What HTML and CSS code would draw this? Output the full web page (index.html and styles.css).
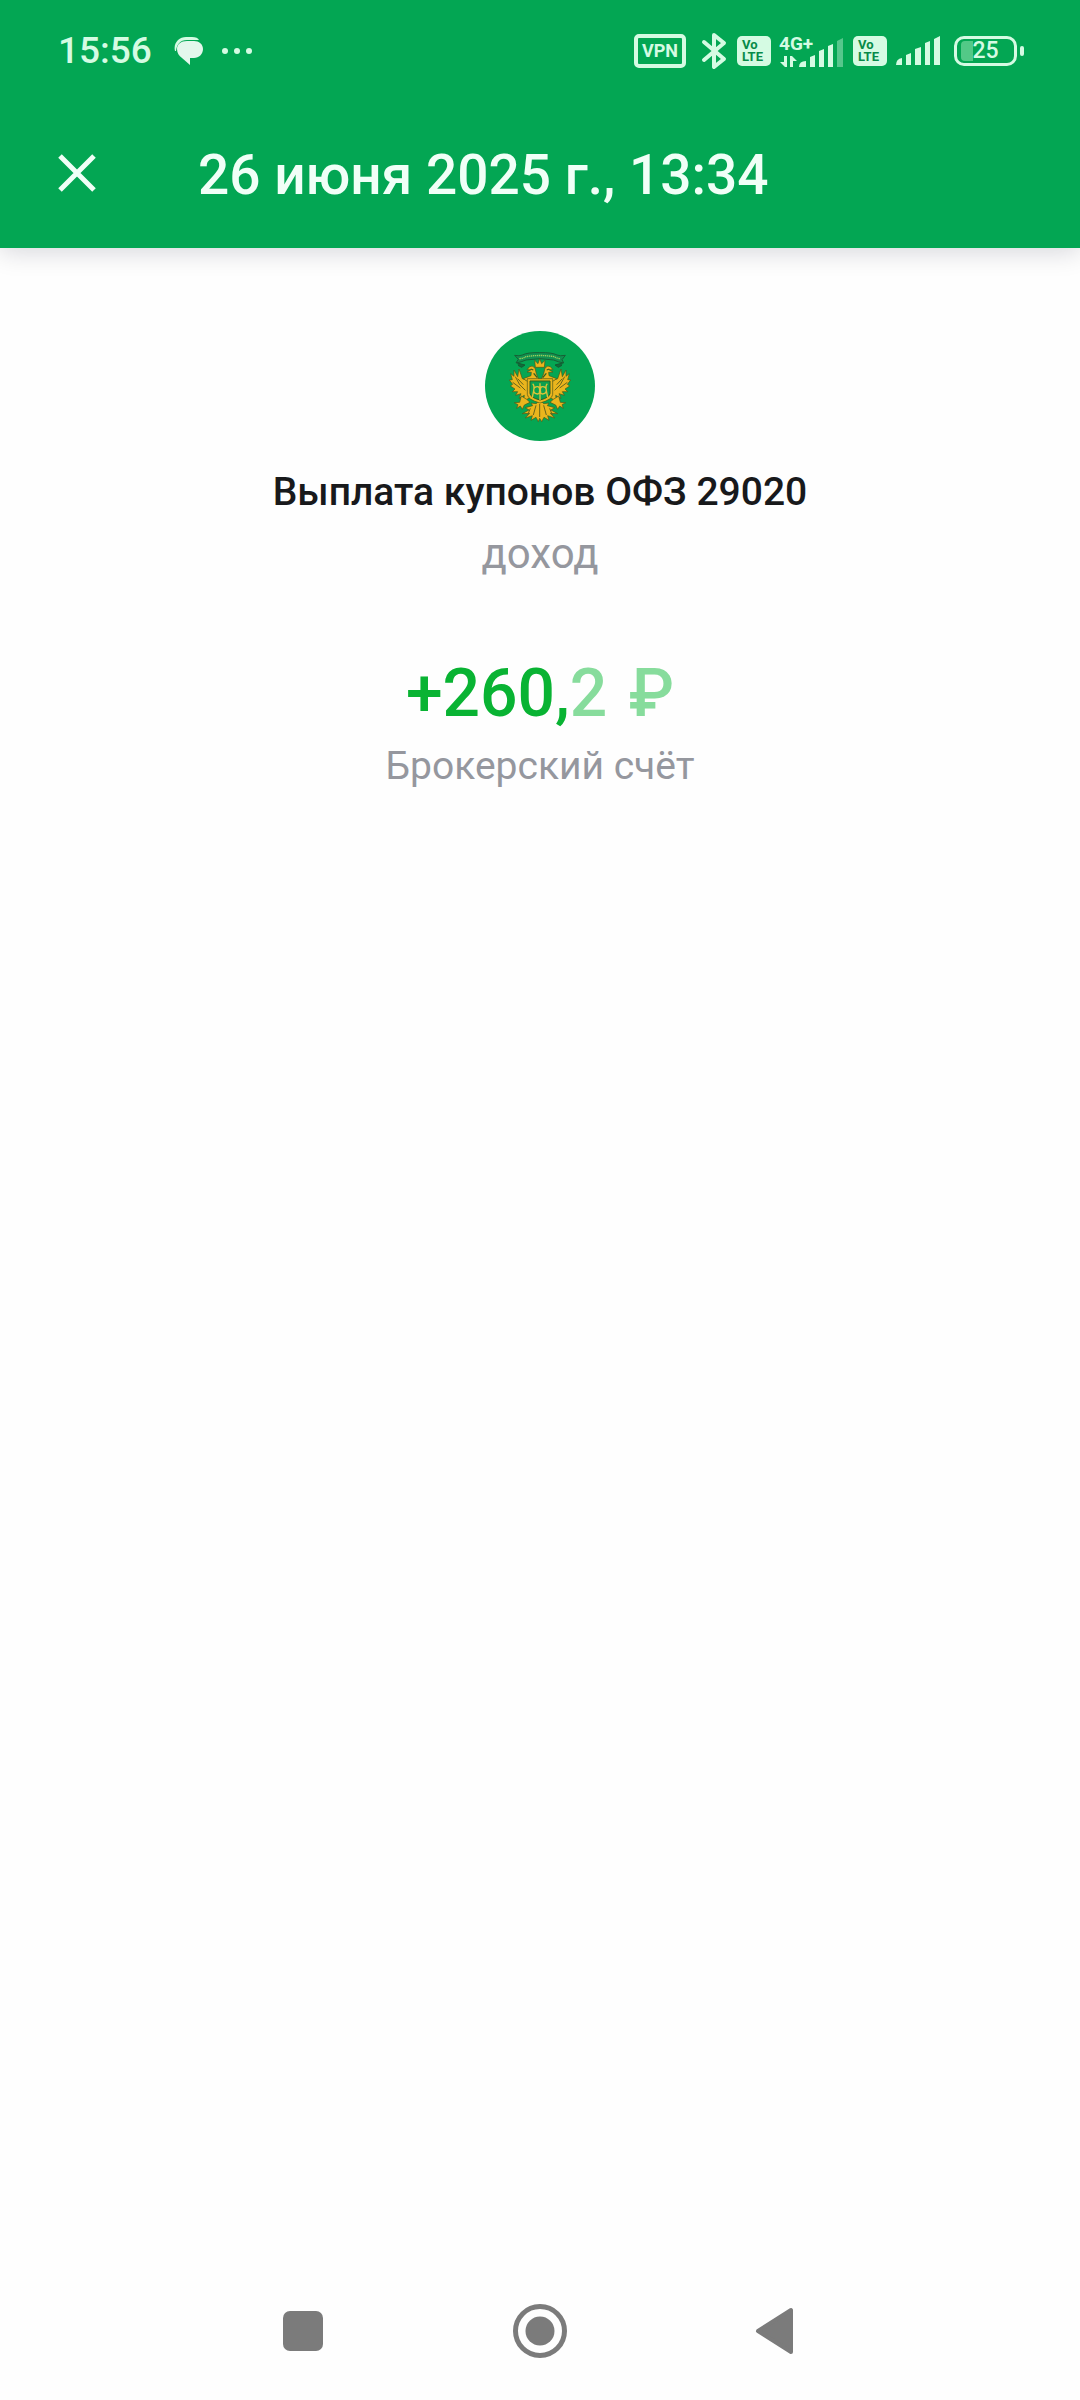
FILE: index.html
```html
<!DOCTYPE html>
<html lang="ru">
<head>
    <meta charset="UTF-8">
    <meta name="viewport" content="width=device-width, initial-scale=1">
    <title>Выплата купонов ОФЗ 29020</title>
    <link rel="stylesheet" href="styles.css">
</head>
<body>
    <header class="header">
        <div class="status-bar">
            <div class="status-left">
                <span class="clock">15:56</span>
                <svg class="chat-icon" width="30" height="30" viewBox="0 0 30 30">
                    <path d="M1 15C-1 7 5 1 12 1H18C22 1 24 2 25 4H13C6 4 3 8 2 15Z" fill="#d5fbe3"/>
                    <path d="M13 5H20C25 5 29 8 29 13C29 18 25 22 20 22H16V29L8 22C5 20 3 17 3 13C3 8 7 5 13 5Z" fill="#e4f7ec"/>
                </svg>
                <svg width="32" height="30" viewBox="0 0 32 30" fill="#d5fbe3">
                    <circle cx="4" cy="15" r="3"/>
                    <circle cx="16" cy="15" r="3"/>
                    <circle cx="28" cy="15" r="3"/>
                </svg>
            </div>
            <div class="status-right">
                <span class="vpn">VPN</span>
                <svg class="bluetooth" width="26" height="38" viewBox="0 0 26 38" fill="none" stroke="#d5fbe3" stroke-width="4" stroke-linejoin="round" stroke-linecap="round">
                    <path d="M3 10L23 27L13 35V3L23 11L3 28"/>
                </svg>
                <span class="volte"><span>Vo</span><span>LTE</span></span>
                <svg class="mobile" width="66" height="36" viewBox="0 0 66 36" fill="#d5fbe3">
                    <text class="network" x="0" y="17">4G+</text>
                    <path d="M5 23H8V34H6L1 29H5ZM11 34V23H13L18 28H14V34Z"/>
                    <path d="M20 34Q20 28 27 28V34Z"/>
                    <path d="M31 24L36 22V34H31ZM40 18L45 16V34H40ZM49 13L54 11V34H49Z"/>
                    <path d="M58 8L64 5V34H58Z" opacity=".4"/>
                </svg>
                <span class="volte"><span>Vo</span><span>LTE</span></span>
                <svg class="signal" width="44" height="30" viewBox="0 0 44 30" fill="#d5fbe3">
                    <path d="M0 29Q0 23 6 22V29Z"/>
                    <path d="M10 19L15 17V29H10ZM19 13L25 11V29H19ZM29 7L34 5V29H29ZM38 3L44 0V29H38Z"/>
                </svg>
                <span class="battery"><span class="battery-level">25</span></span>
            </div>
        </div>
        <div class="toolbar">
            <button class="close" type="button" aria-label="Закрыть">
                <svg width="38" height="38" viewBox="0 0 38 38" fill="none" stroke="#f0fff7" stroke-width="5">
                    <path d="M2 2L36 36M36 2L2 36"/>
                </svg>
            </button>
            <h1 class="date">26 июня 2025 г., 13:34</h1>
        </div>
    </header>

    <main class="operation">
        <svg class="logo" viewBox="45 47 330 330">
            <circle cx="210" cy="212" r="165" fill="#05a653"/>
            <!-- ribbon -->
            <path d="M134 120Q148 123 157 119Q172 111 209 112Q246 111 261 119Q270 123 286 120L276 133L281 143Q264 140 251 134Q210 126 168 134Q154 140 138 143L145 132Z" fill="#129050" stroke="#175f35" stroke-width="3"/>
            <path d="M148 130Q160 129 168 124Q209 117 252 124Q260 129 272 130" fill="none" stroke="#9bcd5b" stroke-width="4" stroke-dasharray="4 2"/>
            <path d="M142 143L165 149L155 156L144 150M278 143L255 149L265 156L276 150" fill="#116c3b" stroke="#155b32" stroke-width="3"/>
            <g stroke="#4d5617" stroke-width="2" fill="#eab51d" stroke-linejoin="round">
                <!-- wings -->
                <path d="M176 197L157 190L147 161L143 184L132 164L132 183L122 175L127 193L118 194L128 207L121 212L135 221L127 229L143 229L137 240L153 235L147 249L163 240L160 258L178 248L184 208Z"/>
                <path d="M244 197L263 190L273 161L277 184L288 164L288 183L298 175L293 193L302 194L292 207L299 212L285 221L293 229L277 229L283 240L267 235L273 249L257 240L260 258L242 248L236 208Z"/>
                <!-- heads -->
                <path d="M208 196L199 175L195 158Q187 149 179 154L171 163L183 163L171 170L184 171L183 181L160 190L178 202Z"/>
                <path d="M212 196L221 175L225 158Q233 149 241 154L249 163L237 163L249 170L236 171L237 181L260 190L242 202Z"/>
                <path d="M196 156L194 135L204 145L209 130L215 145L225 135L223 156Z"/>
                <!-- legs -->
                <path d="M154 242L149 261L133 262L144 268L140 279L151 272L157 282L163 269L180 261L170 252ZM266 242L271 261L287 262L276 268L280 279L269 272L263 282L257 269L240 261L250 252Z"/>
                <!-- tail -->
                <path d="M209 253L199 265L183 263L188 271L166 277L177 284L157 295L179 294L166 308L187 301L183 315L198 306L205 319L209 309L215 319L222 306L237 315L233 301L254 308L241 294L263 295L243 284L254 277L232 271L237 263L221 265Z"/>
                <path d="M172 190H248V237Q247 253 210 263Q173 253 172 237Z"/>
            </g>
            <path d="M180 197H240V234Q239 247 210 254Q181 247 180 234Z" fill="#0ca04e" stroke="#315e22" stroke-width="3"/>
            <path d="M188 205Q194 210 191 226L187 247M232 205Q226 210 229 226L233 247M210 204V254M203 214Q191 214 191 225Q191 236 203 236Q209 236 209 225Q209 214 203 214M217 214Q229 214 229 225Q229 236 217 236Q211 236 211 225Q211 214 217 214" fill="none" stroke="#dec339" stroke-width="4"/>
            <path d="M136 184L149 208L166 225M143 190L160 208M128 201L151 218M284 184L271 208L254 225M277 190L260 208M292 201L269 218M198 270L190 299M221 270L229 299M209 266V305M181 279L173 299M239 279L247 299" fill="none" stroke="#69651b" stroke-width="3"/>
            <path d="M182 161L190 164M238 161L230 164M191 174L202 187M229 174L218 187" stroke="#315e22" stroke-width="4"/>
        </svg>
        <h2 class="name">Выплата купонов ОФЗ 29020</h2>
        <p class="type">доход</p>
        <p class="amount">+260,<span class="fraction">2 <span class="currency">₽</span></span></p>
        <p class="account">Брокерский счёт</p>
    </main>

    <nav class="nav-bar">
        <button type="button" aria-label="Недавние">
            <svg width="54" height="54" viewBox="0 0 54 54" fill="#7b7b7b">
                <rect x="7" y="7" width="40" height="40" rx="7"/>
            </svg>
        </button>
        <button type="button" aria-label="Домой">
            <svg width="54" height="54" viewBox="0 0 54 54">
                <circle cx="27" cy="27" r="24.5" fill="none" stroke="#7b7b7b" stroke-width="5"/>
                <circle cx="27" cy="27" r="14.5" fill="#7b7b7b"/>
            </svg>
        </button>
        <button type="button" aria-label="Назад">
            <svg width="54" height="54" viewBox="0 0 54 54">
                <path d="M8 27L41 6V48Z" fill="#7b7b7b" stroke="#7b7b7b" stroke-width="4" stroke-linejoin="round"/>
            </svg>
        </button>
    </nav>
</body>
</html>
```

FILE: styles.css
```css
* {
    box-sizing: border-box;
}
body {
    margin: 0;
    min-height: 100vh;
    display: flex;
    flex-direction: column;
    font-family: Roboto, "Liberation Sans", sans-serif;
    background-color: #fefefe;
}
h1, h2, p {
    margin: 0;
    font-weight: 500;
}
svg {
    display: block;
    flex-shrink: 0;
}
button {
    padding: 0;
    border: none;
    background: none;
    cursor: pointer;
}

/* header */
.header {
    background-color: #03a653;
    box-shadow: 0 4px 24px rgba(0, 10, 40, 0.16);
}
.status-bar {
    height: 101px;
    padding: 0 56px 0 58px;
    display: flex;
    align-items: center;
    justify-content: space-between;
    color: #d5fbe3;
}
.status-left,
.status-right {
    display: flex;
    align-items: center;
}
.clock {
    font-size: 37px;
    font-weight: 500;
    line-height: 44px;
}
.chat-icon {
    margin: 0 17px 0 22px;
}
.vpn {
    width: 52px;
    height: 34px;
    border: 4px solid #d5fbe3;
    border-radius: 5px;
    font-size: 18px;
    font-weight: 700;
    line-height: 26px;
    text-align: center;
}
.bluetooth {
    margin: 0 10px 0 15px;
}
.volte {
    width: 34px;
    height: 30px;
    padding: 3px 5px;
    border-radius: 5px;
    display: flex;
    flex-direction: column;
    background-color: #d5fbe3;
    color: #078a49;
    font-size: 13px;
    font-weight: 700;
    line-height: 12px;
}
.mobile {
    margin: 0 8px;
}
.network {
    font-size: 19px;
    font-weight: 700;
}
.signal {
    margin: 0 14px 0 9px;
}
.battery {
    position: relative;
    width: 63px;
    height: 30px;
    margin-right: 7px;
    padding: 2px 4px;
    border: 3px solid #d5fbe3;
    border-radius: 10px;
}
.battery::after {
    content: "";
    position: absolute;
    top: 7px;
    right: -10px;
    width: 4px;
    height: 10px;
    border-radius: 2px;
    background-color: #d5fbe3;
}
.battery-level {
    display: block;
    border-radius: 4px;
    background: linear-gradient(to right, #53c987 25%, transparent 25%);
    font-size: 23px;
    font-weight: 500;
    line-height: 20px;
    text-align: center;
}
.toolbar {
    height: 147px;
    padding: 0 58px 4px;
    display: flex;
    align-items: center;
}
.close {
    margin-right: 102px;
}
.date {
    padding-top: 4px;
    font-size: 55px;
    line-height: 64px;
    color: #f0fff7;
}

/* operation details */
.operation {
    flex: 1;
    padding: 83px 32px;
    display: flex;
    flex-direction: column;
    align-items: center;
    text-align: center;
}
.logo {
    width: 110px;
    height: 110px;
    margin-bottom: 27px;
}
.name {
    font-size: 39px;
    line-height: 48px;
    color: #18191b;
}
.type,
.account {
    font-size: 39px;
    font-weight: 400;
    line-height: 48px;
    color: #95979e;
}
.type {
    margin: 14px 0 78px;
    font-size: 42px;
}
.amount {
    font-size: 66px;
    line-height: 76px;
    color: #09b333;
}
.fraction {
    color: #87dc9c;
}
.currency {
    margin-left: 5px;
}
.account {
    margin-top: 10px;
}

/* system navigation */
.nav-bar {
    height: 138px;
    padding: 0 276px;
    display: flex;
    align-items: center;
    justify-content: space-between;
}
```
